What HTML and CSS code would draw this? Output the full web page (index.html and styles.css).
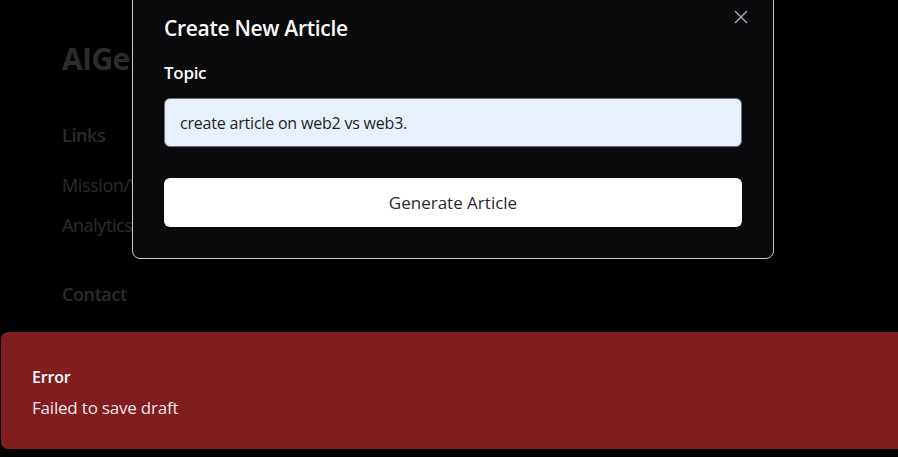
FILE: index.html
```html
<!DOCTYPE html>
<html lang="en">
<head>
<meta charset="utf-8">
<title>Create New Article</title>
<link rel="stylesheet" href="styles.css">
</head>
<body>
<div class="page">
  <aside class="footer-col">
    <div class="brand">AIGenius</div>
    <h3 class="col-title links-title">Links</h3>
    <ul class="col-list">
      <li>Mission/Vision</li>
      <li>Analytics</li>
    </ul>
    <h3 class="col-title contact-title">Contact</h3>
  </aside>
</div>

<div class="overlay"></div>

<div class="dialog" role="dialog">
  <button class="close" aria-label="Close">
    <svg width="14" height="14" viewBox="0 0 14 14" fill="none" stroke="currentColor" stroke-width="1.5" stroke-linecap="round"><path d="M1.5 1.5l11 11M12.5 1.5l-11 11"/></svg>
  </button>
  <h2 class="dialog-title">Create New Article</h2>
  <label class="field-label" for="topic">Topic</label>
  <input id="topic" class="field-input" type="text" value="create article on web2 vs web3.">
  <button class="primary-btn">Generate Article</button>
</div>

<div class="toast">
  <div class="toast-title">Error</div>
  <div class="toast-desc">Failed to save draft</div>
</div>
</body>
</html>
```

FILE: styles.css
```css
* { box-sizing: border-box; }
html, body {
  margin: 0;
  padding: 0;
  background: #000;
  font-family: "Open Sans", "Noto Sans", sans-serif;
  overflow: hidden;
  height: 100%;
}
.page {
  padding: 41px 0 0 62px;
  color: #d4d4d4;
}
.brand {
  font-size: 30px;
  font-weight: 700;
  line-height: 36px;
  letter-spacing: -0.6px;
}
.col-title {
  margin: 0;
  font-size: 18px;
  font-weight: 600;
  line-height: 28px;
  letter-spacing: -0.4px;
}
.links-title { margin-top: 44px; }
.contact-title { margin-top: 41px; }
.col-list {
  list-style: none;
  margin: 22px 0 0;
  padding: 0;
  display: flex;
  flex-direction: column;
  gap: 12px;
  font-size: 18px;
  line-height: 28px;
  letter-spacing: -0.4px;
}
.overlay {
  position: fixed;
  inset: 0;
  background: rgba(0, 0, 0, 0.8);
}
.dialog {
  position: absolute;
  left: 132px;
  top: -18px;
  width: 642px;
  padding: 31px;
  background: #0a0a0c;
  border: 1px solid #c9c9cc;
  border-radius: 8px;
  display: flex;
  flex-direction: column;
  color: #fafafa;
}
.close {
  position: absolute;
  top: 27px;
  right: 25px;
  width: 14px;
  height: 14px;
  padding: 0;
  border: 0;
  background: none;
  color: #a3a3a8;
  display: flex;
}
.dialog-title {
  margin: 0;
  font-size: 21px;
  font-weight: 600;
  line-height: 28px;
  letter-spacing: -0.3px;
}
.field-label {
  margin-top: 19px;
  font-size: 17px;
  font-weight: 600;
  line-height: 24px;
  letter-spacing: -0.3px;
}
.field-input {
  margin-top: 13px;
  height: 49px;
  width: 100%;
  padding: 0 15px;
  background: #e8f0fe;
  border: 1px solid #6b6b70;
  border-radius: 6px;
  font-family: inherit;
  font-size: 16px;
  letter-spacing: -0.2px;
  color: #1f1f22;
  outline: none;
}
.primary-btn {
  margin-top: 31px;
  height: 49px;
  width: 100%;
  background: #fff;
  border: 0;
  border-radius: 6px;
  font-family: inherit;
  font-size: 17px;
  font-weight: 500;
  color: #2a2a2e;
}
.toast {
  position: fixed;
  left: 1px;
  top: 332px;
  width: 920px;
  height: 117px;
  background: #7f1d1f;
  border-radius: 7px;
  padding: 34px 31px;
  color: #fff;
}
.toast-title {
  font-size: 16px;
  font-weight: 600;
  line-height: 23px;
  letter-spacing: -0.2px;
}
.toast-desc {
  margin-top: 7px;
  font-size: 17px;
  line-height: 24px;
  letter-spacing: -0.2px;
  color: rgba(255, 255, 255, 0.92);
}
```
